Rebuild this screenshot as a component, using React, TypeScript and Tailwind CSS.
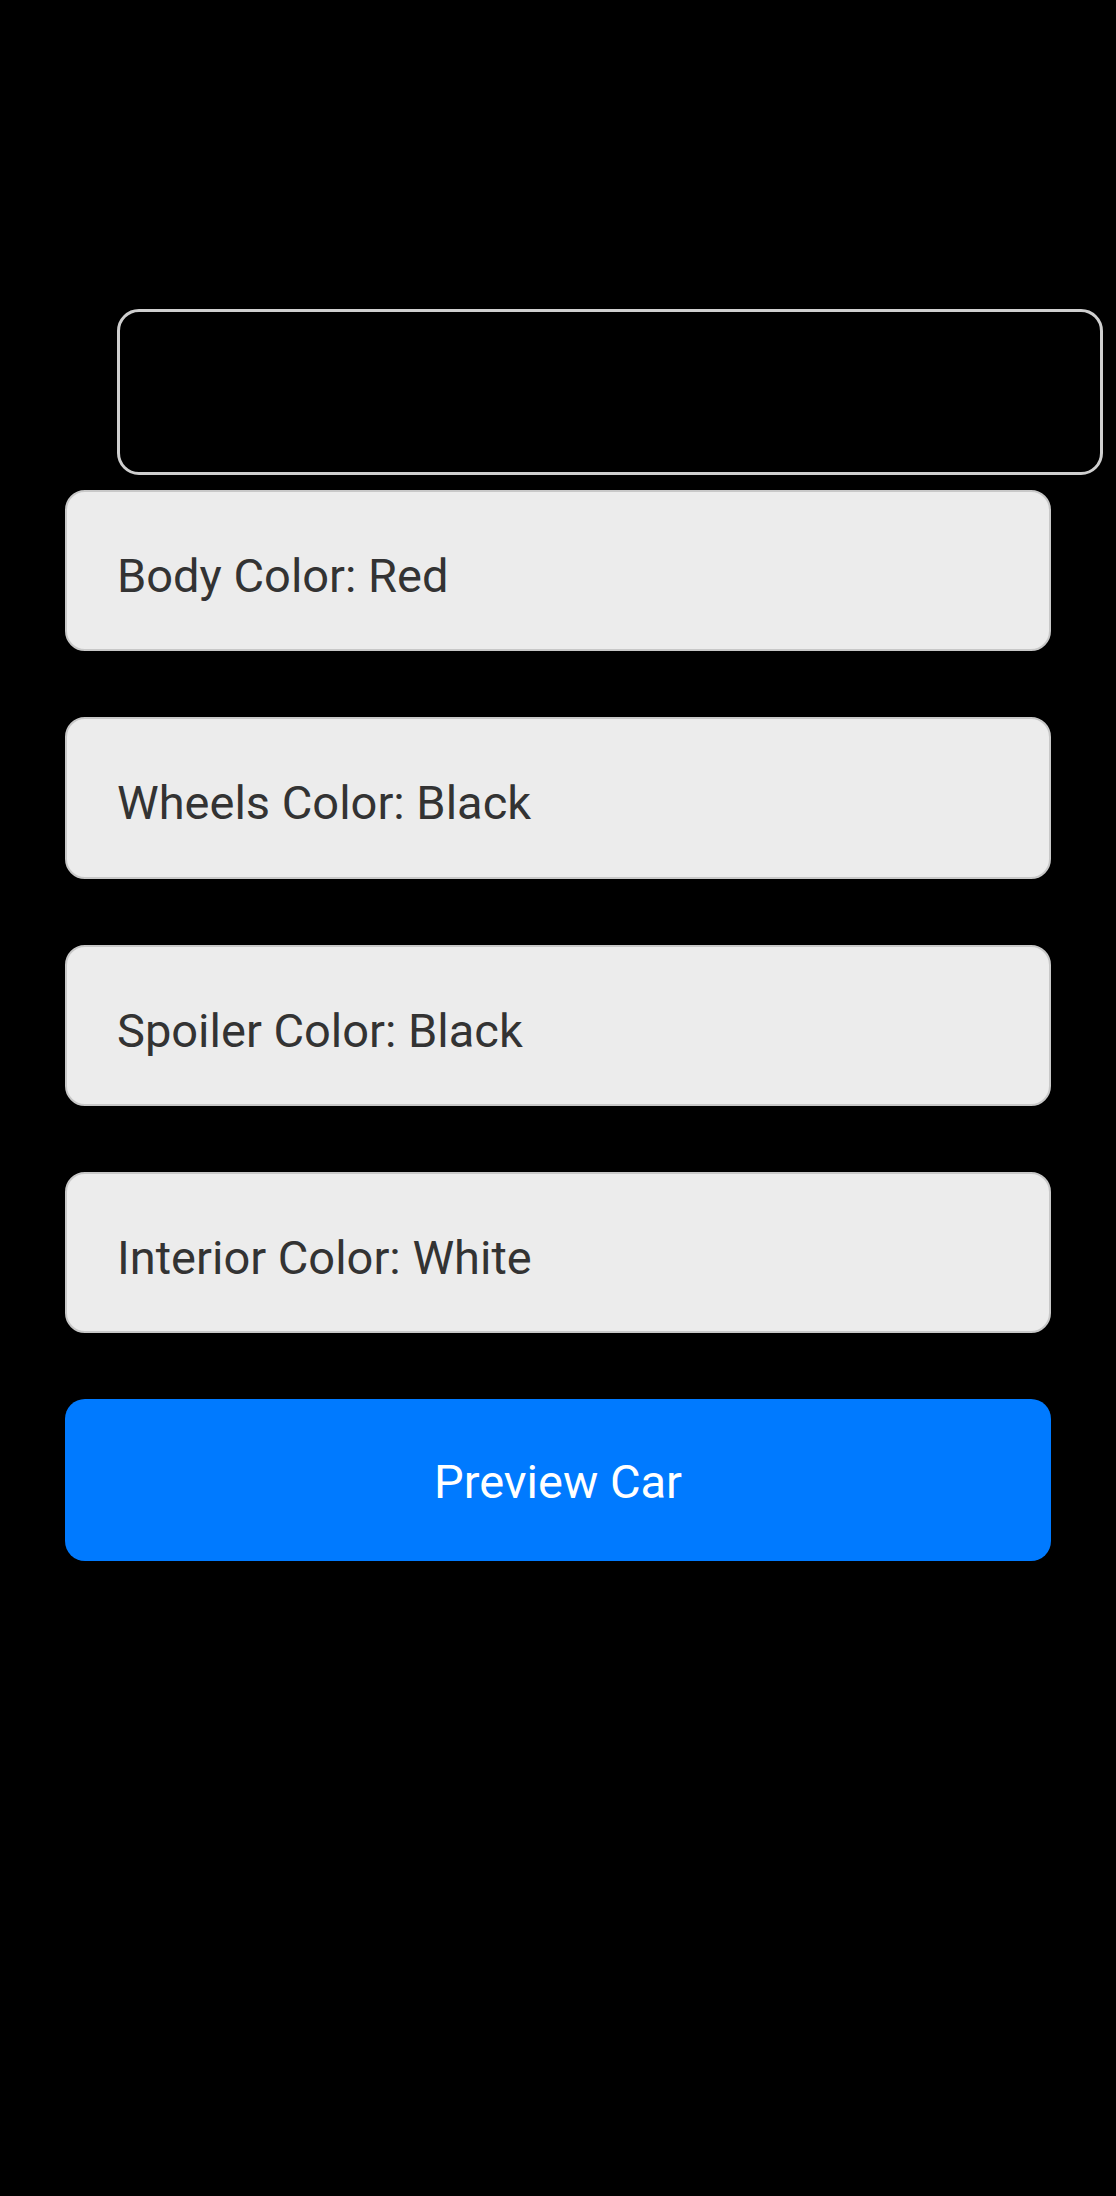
import React from "react";

const items = [
  "Body Color: Red",
  "Wheels Color: Black",
  "Spoiler Color: Black",
  "Interior Color: White",
];

export default function App() {
  return (
    <div
      className="min-h-[2196px] w-full bg-black overflow-hidden"
      style={{ fontFamily: "Roboto, 'Noto Sans', sans-serif" }}
    >
      <div className="flex flex-col pl-[65px] pt-[309px]">
        <div className="ml-[52px] h-[166px] w-[986px] shrink-0 rounded-[22px] border-[3px] border-[#cfcfcf] bg-black" />
        <div className="mt-[15px] flex w-[986px] flex-col gap-[66px]">
          {items.map((t) => (
            <div
              key={t}
              className="h-[161.33px] rounded-[20px] border-2 border-[#c8c8c8] bg-[#ececec] pl-[50px] pt-[56px] text-[47px] leading-[55px] text-[#333333]"
            >
              {t}
            </div>
          ))}
          <button className="flex h-[161.33px] items-center justify-center rounded-[20px] bg-[#007aff] pt-[4px] text-[47px] leading-[55px] text-white">
            Preview Car
          </button>
        </div>
      </div>
    </div>
  );
}
